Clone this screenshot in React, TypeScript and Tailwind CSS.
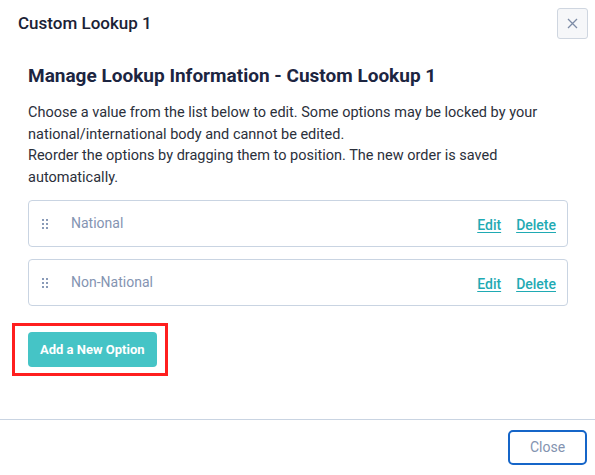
import React from "react";

const options = ["National", "Non-National"];

function DragHandle() {
  return (
    <svg width="6" height="10" viewBox="0 0 6 10" className="shrink-0">
      {[0, 4, 8].map((y) =>
        [0, 4].map((x) => <rect key={`${x}-${y}`} x={x} y={y} width="2" height="2" fill="#8a9bb8" />)
      )}
    </svg>
  );
}

export default function App() {
  return (
    <div
      className="w-[595px] h-[475px] bg-white flex flex-col"
      style={{ fontFamily: "Roboto, 'Liberation Sans', sans-serif" }}
    >
      {/* Header */}
      <div className="flex items-center justify-between pl-[18px] pr-[7px] pt-[8px]">
        <h1 className="text-[17px] font-medium text-[#1b2236]">Custom Lookup 1</h1>
        <button className="w-[31px] h-[31px] flex items-center justify-center rounded-[3px] border border-[#cfd6e0] bg-[#f6f7f9]">
          <svg width="11" height="11" viewBox="0 0 11 11">
            <path d="M1 1L10 10M10 1L1 10" stroke="#7d8ca6" strokeWidth="1.3" />
          </svg>
        </button>
      </div>

      {/* Body */}
      <div className="flex-1 pl-[28px] pr-[27px] pt-[25px]">
        <h2 className="text-[19px] leading-[24px] font-bold text-[#1c2541]">
          Manage Lookup Information - Custom Lookup 1
        </h2>
        <p className="mt-[14px] text-[14.5px] leading-[21.5px] text-[#2b303b]">
          Choose a value from the list below to edit. Some options may be locked by your national/international body
          and cannot be edited.
          <br />
          Reorder the options by dragging them to position. The new order is saved automatically.
        </p>

        <div className="mt-[12px] flex flex-col gap-[12px]">
          {options.map((name) => (
            <div
              key={name}
              className="h-[47px] flex items-center rounded-[4px] border border-[#c9d4e2] pl-[13px] pr-[11px]"
            >
              <DragHandle />
              <span className="ml-[23px] text-[14px] text-[#8494b2]">{name}</span>
              <div className="ml-auto flex gap-[15px] pt-[3px] text-[14px] font-medium text-[#1faab3]">
                <a className="underline underline-offset-2">Edit</a>
                <a className="underline underline-offset-2">Delete</a>
              </div>
            </div>
          ))}
        </div>

        <div className="relative mt-[26px] w-fit">
          <button className="h-[35px] px-[12px] rounded-[4px] bg-[#45c4c6] text-white text-[13px] font-bold">
            Add a New Option
          </button>
          <div className="absolute left-[-16px] top-[-9px] w-[156px] h-[53px] border-[3px] border-[#ff1f1f]" />
        </div>
      </div>

      {/* Footer */}
      <div className="border-t border-[#c9d4e2] flex justify-end pt-[10px] pb-[10px] pr-[8px]">
        <button className="w-[79px] h-[35px] rounded-[5px] border-2 border-[#1565c8] text-[14px] text-[#8393b0]">
          Close
        </button>
      </div>
    </div>
  );
}
